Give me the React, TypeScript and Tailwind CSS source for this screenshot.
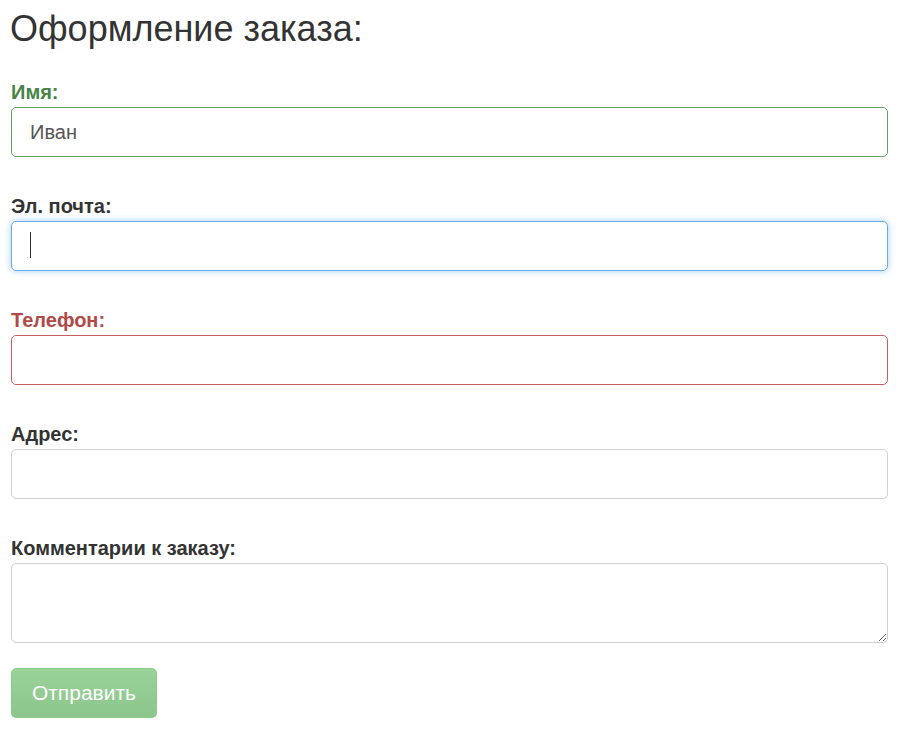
import React from "react";

const font = { fontFamily: '"Liberation Sans", Arial, sans-serif' };

function Field({
  label,
  labelClass,
  borderClass,
  value,
  caret,
}: {
  label: string;
  labelClass: string;
  borderClass: string;
  value?: string;
  caret?: boolean;
}) {
  return (
    <div className="mb-[37px]">
      <label className={`block h-[24px] mb-[3px] text-[20px] font-bold leading-[24px] ${labelClass}`}>
        {label}
      </label>
      <div className="relative">
        <input
          type="text"
          readOnly
          defaultValue={value}
          className={`w-full h-[50px] px-[18px] text-[20px] text-[#555] bg-white rounded-[5px] border outline-none ${borderClass}`}
          style={font}
        />
        {caret && (
          <span className="absolute left-[19px] top-[11px] w-px h-[26px] bg-[#333]" />
        )}
      </div>
    </div>
  );
}

export default function App() {
  return (
    <div className="bg-white min-h-screen pl-[11px] pr-[12px]" style={font}>
      <h2 className="pt-[9px] mb-[31px] text-[36px] leading-[40px] font-normal text-[#333] -ml-[1px]">
        Оформление заказа:
      </h2>

      <Field
        label="Имя:"
        labelClass="text-[#468446]"
        borderClass="border-[#64a064]"
        value="Иван"
      />
      <Field
        label="Эл. почта:"
        labelClass="text-[#333]"
        borderClass="border-[#66afe9] shadow-[0_0_7px_rgba(102,175,233,0.6)]"
        caret
      />
      <Field
        label="Телефон:"
        labelClass="text-[#b04a48]"
        borderClass="border-[#c95e5e]"
      />
      <Field
        label="Адрес:"
        labelClass="text-[#333]"
        borderClass="border-[#d0d0d0]"
      />

      <div className="mb-[25px]">
        <label className="block h-[24px] mb-[3px] text-[20px] font-bold leading-[24px] text-[#333]">
          Комментарии к заказу:
        </label>
        <textarea
          readOnly
          className="block w-full h-[80px] px-[18px] py-[10px] text-[20px] text-[#555] bg-white rounded-[5px] border border-[#d0d0d0] outline-none"
          style={font}
        />
      </div>

      <button
        type="button"
        className="w-[146px] h-[50px] rounded-[5px] bg-gradient-to-b from-[#99d399] to-[#8cc68c] border border-[#8ccb8c] text-white text-[21px]"
        style={font}
      >
        Отправить
      </button>
    </div>
  );
}
